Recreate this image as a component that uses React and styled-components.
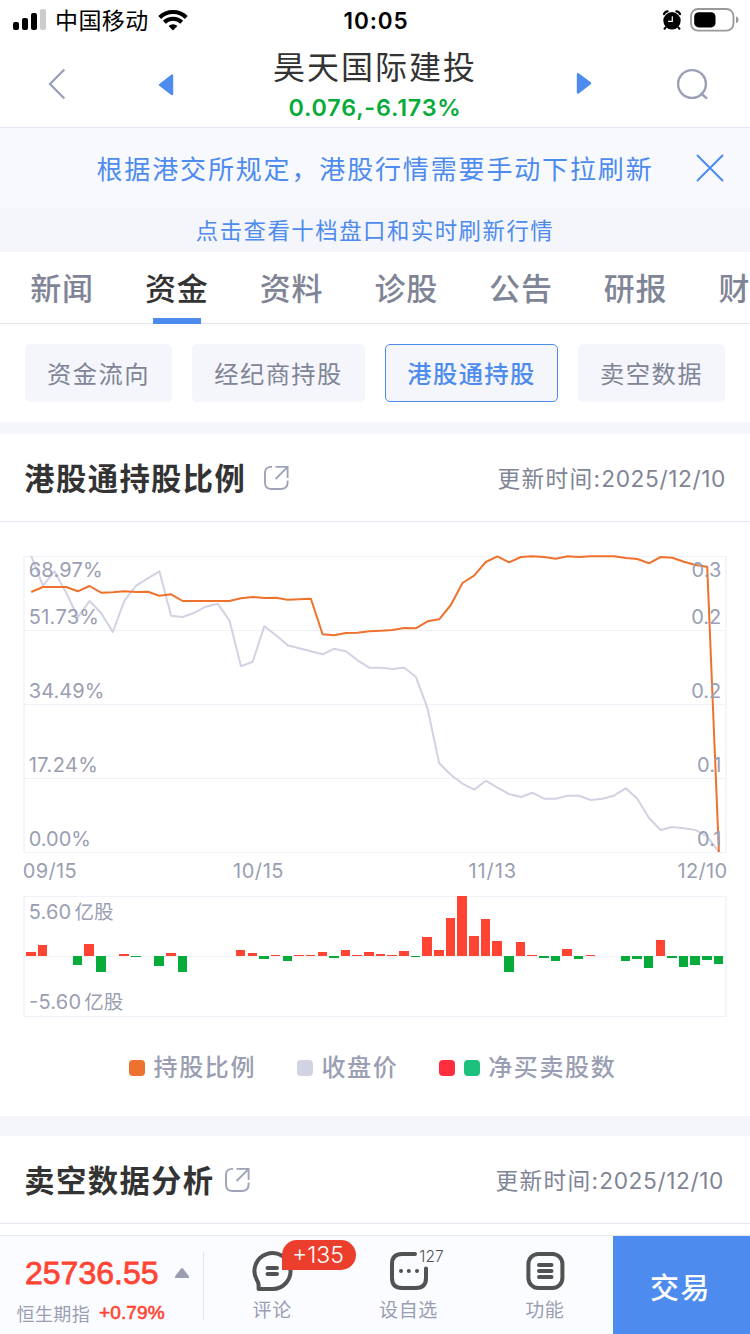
import React from "react";
import styled, { createGlobalStyle } from "styled-components";

const GlobalStyle = createGlobalStyle`
    * {
        box-sizing: border-box;
    }
    body {
        margin: 0;
        background: #fff;
        font-family: Inter, "Noto Sans CJK SC", sans-serif;
        overflow: hidden;
    }
`

const tabs = ["新闻", "资金", "资料", "诊股", "公告", "研报", "财"]

const chips = ["资金流向", "经纪商持股", "港股通持股", "卖空数据"]

// y positions of each trading day, oldest first
const ratioLine = [
    592, 587, 587, 587, 591.3, 586, 592.7, 592.3, 591.3, 592, 591.7, 595.7,
    594.3, 601, 601, 601, 601, 601, 598.3, 597, 598, 597.7, 599.7, 599.3,
    598.7, 634.3, 635.3, 633, 632.7, 631.3, 630.7, 630, 628, 628.3, 621.3, 619.3,
    605, 583, 575.7, 562, 556.3, 562.3, 557, 556.3, 557, 558.7, 556.3, 557,
    556.3, 556.3, 556.3, 558, 559, 563.3, 557, 557.7, 561.7, 565, 566.7, 852,
]

const priceLine = [
    556, 585.7, 571.3, 592.7, 617.3, 601, 613, 632, 600.7, 585.7, 578.3, 571.3,
    615.7, 617, 612.7, 606.7, 603.7, 620.3, 666.3, 661.7, 626.3, 635.3, 645.3, 648.3,
    651.3, 654.3, 648.7, 651.3, 660.3, 667.7, 667.7, 669, 667.7, 676.7, 708.3, 763.3,
    774.7, 783.7, 789.7, 780.7, 787.7, 794, 797, 792.7, 798.7, 798.7, 795.7, 795.7,
    800, 798.7, 795.7, 788.3, 798.7, 818, 830, 827, 828.3, 830, 836.7, 852,
]

const netBars = [
    4, 11, 0, 0, -9, 12, -16, 0, 2, -1, 0, -10,
    3, -16, 0, 0, 0, 0, 6, 3, -3, 1, -5, 1,
    1, 4, -2, 6, 1, 4, 2, 1, 5, -1, 19, 6,
    38, 60, 20, 37, 15, -16, 14, 1, -2, -5, 7, -3,
    1, 0, 0, -5, -3, -12, 16, -2, -11, -9, -4, -8,
]

const leftLabels = [
    { y: 577, text: "68.97%", width: 74 },
    { y: 624, text: "51.73%", width: 70.3 },
    { y: 698.3, text: "34.49%", width: 75.7 },
    { y: 772.3, text: "17.24%", width: 69.2 },
    { y: 846.3, text: "0.00%", width: 62.3 },
]

const rightLabels = [
    { y: 577, text: "0.3" },
    { y: 624, text: "0.2" },
    { y: 698.3, text: "0.2" },
    { y: 772.3, text: "0.1" },
    { y: 846.3, text: "0.1" },
]

const dayX = (i) => 31.2 + i * 11.656

const toPoints = (line) => line.map((y, i) => `${dayX(i).toFixed(1)},${y}`).join(" ")

function StatusBar(){
    return(
        <Status>
            <StatusSide>
                <svg width="34" height="22" viewBox="13 9 34 22">
                    <rect x="13" y="22" width="6" height="8" rx="2"/>
                    <rect x="22" y="18" width="6" height="12" rx="2"/>
                    <rect x="31" y="13" width="6" height="17" rx="2"/>
                    <rect x="40" y="9" width="6" height="21" rx="2" fill="#ccc"/>
                </svg>
                <Carrier>中国移动</Carrier>
                <svg width="30" height="22" viewBox="0 0 30 22" fill="none" stroke="#000" strokeWidth="4.1">
                    <path d="M1.7 8.4A19.2 19.2 0 0 1 28.3 8.4"/>
                    <path d="M6.3 13.3A12.5 12.5 0 0 1 23.7 13.3"/>
                    <path d="M15 21.6L10.6 17.1A6.3 6.3 0 0 1 19.4 17.1Z" fill="#000" stroke="none"/>
                </svg>
            </StatusSide>
            <Clock>10:05</Clock>
            <StatusSide $end>
                <svg width="20" height="20" viewBox="0 0 20 20">
                    <circle cx="10" cy="10.8" r="8.7"/>
                    <path d="M2 4.2Q3 1.6 5.6 1.4M18 4.2Q17 1.6 14.4 1.4" fill="none" stroke="#000" strokeWidth="2.2" strokeLinecap="round"/>
                    <path d="M4 17L2 19.4M16 17L18 19.4" stroke="#000" strokeWidth="2"/>
                    <path d="M10.3 6.2V11.3H6" fill="none" stroke="#fff" strokeWidth="1.2"/>
                </svg>
                <svg width="49" height="24" viewBox="0 0 49 24">
                    <rect x="1" y="1" width="42.5" height="21.6" rx="7" fill="none" stroke="#999" strokeWidth="1.8"/>
                    <rect x="4.2" y="4.2" width="21.3" height="15.2" rx="4.5"/>
                    <path d="M46 8.3Q48.6 9.4 48.6 11.8T46 15.3Z" fill="#999"/>
                </svg>
            </StatusSide>
        </Status>
    )
}

function StockHeader(){
    return(
        <Header>
            <svg width="18" height="32" viewBox="0 0 18 32" fill="none" stroke="#9a9fb3" strokeWidth="2.3">
                <path d="M16.3 1.5L2 16L16.3 30.5"/>
            </svg>
            <svg width="16" height="24" viewBox="0 0 16 24" fill="#4e8bee" stroke="#4e8bee" strokeWidth="2.4" strokeLinejoin="round">
                <path d="M14 3.6V22L2 12.9Z"/>
            </svg>
            <StockName>
                <h1>昊天国际建投</h1>
                <span>0.076,-6.173%</span>
            </StockName>
            <svg width="16" height="24" viewBox="0 0 16 24" fill="#4e8bee" stroke="#4e8bee" strokeWidth="2.4" strokeLinejoin="round">
                <path d="M2 2.2V20.6L14 11.3Z"/>
            </svg>
            <svg width="32" height="32" viewBox="0 0 32 32" fill="none" stroke="#9a9fb3" strokeWidth="2.4">
                <circle cx="15" cy="16" r="13.9"/>
                <path d="M23.7 25L30 30.6"/>
            </svg>
        </Header>
    )
}

function CardTitle({ title, date, shift }){
    return(
        <TitleRow $shift={shift}>
            <h2>{title}</h2>
            <svg width="26" height="26" viewBox="0 0 26 26" fill="none" stroke="#9fa3b7" strokeWidth="1.9">
                <path d="M9 1.9H8Q2 1.9 2 7.9V17.5Q2 24 8.5 24H17.5Q24.6 24 24.6 17.5V15.5"/>
                <path d="M12.5 1.9H24.6V13M24.2 2.3L12.6 14"/>
            </svg>
            <time>更新时间:<b>{date}</b></time>
        </TitleRow>
    )
}

function HoldingChart(){
    return(
        <Chart width="750" height="508" viewBox="0 522 750 508">
            <g stroke="#f0f0f8" strokeWidth="1" shapeRendering="crispEdges">
                {[556, 630, 704, 778, 852, 896, 956, 1016].map((y) => (
                    <path key={y} d={`M24 ${y + 0.5}H726`}/>
                ))}
            </g>
            <path d="M24 556V853M726 556V853M24 896V1017M726 896V1017" stroke="#f4f4fb" strokeWidth="2"/>
            <polyline points={toPoints(priceLine)} fill="none" stroke="#d1d2e2" strokeWidth="2" strokeLinejoin="round"/>
            <polyline points={toPoints(ratioLine)} fill="none" stroke="#ee722e" strokeWidth="2" strokeLinejoin="round"/>
            {netBars.map((v, i) => {
                if(v === 0) return null
                const left = Math.round(dayX(i) - 5.1)
                const right = Math.floor(dayX(i) + 4.95)
                return(
                    <rect
                        key={i}
                        x={left}
                        y={v > 0 ? 956 - v : 956}
                        width={right - left}
                        height={Math.abs(v)}
                        fill={v > 0 ? "#ff4433" : "#07ab3a"}
                        shapeRendering="crispEdges"
                    />
                )
            })}
            {leftLabels.map((l) => (
                <text key={l.y} x="28.7" y={l.y} textLength={l.width}>{l.text}</text>
            ))}
            {rightLabels.map((l) => (
                <text key={l.y} x="721.3" y={l.y} textAnchor="end">{l.text}</text>
            ))}
            <text x="22.7" y="877.5" textLength="54">09/15</text>
            <text x="233" y="877.5" textLength="50.5">10/15</text>
            <text x="468.5" y="877.5" textLength="47.5">11/13</text>
            <text x="677.5" y="877.5" textLength="49.5">12/10</text>
            <text x="28.7" y="918.6" textLength="42.5">5.60</text>
            <UnitText x="74.5" y="918.9">亿股</UnitText>
            <text x="29" y="1008.6" textLength="52">-5.60</text>
            <UnitText x="84.3" y="1008.9">亿股</UnitText>
        </Chart>
    )
}

function BottomBar(){
    return(
        <Bottom>
            <Index>
                <strong>25736.55</strong>
                <svg width="14" height="10" viewBox="0 0 14 10" fill="#9a9eb2">
                    <path d="M6 0.6Q7 -0.4 8 0.6L14 8.3V10H0V8.3Z"/>
                </svg>
                <p>恒生期指<em>+0.79%</em></p>
            </Index>
            <Action>
                <svg width="44" height="42" viewBox="250 1250 44 42" fill="none" stroke="#515252" strokeWidth="4" strokeLinejoin="round">
                    <path d="M258.6 1289H272.5A18 18 0 1 0 256.8 1279.8Q258.6 1282.5 258.6 1285Z"/>
                    <path d="M267.5 1268H277M267.5 1274H277" strokeLinecap="round"/>
                </svg>
                <span>评论</span>
                <Badge>+135</Badge>
            </Action>
            <Action>
                <svg width="44" height="42" viewBox="386 1250 44 42" fill="none" stroke="#515252" strokeWidth="4" strokeLinecap="round">
                    <path d="M415 1254H402Q392 1254 392 1264V1278Q392 1288 402 1288H416Q426 1288 426 1278V1268.5"/>
                    <path d="M401 1271H401.01M408.8 1271H408.81M417 1271H417.01"/>
                </svg>
                <span>设自选</span>
                <Count>127</Count>
            </Action>
            <Action>
                <svg width="44" height="42" viewBox="523 1250 44 42" fill="none" stroke="#515252" strokeWidth="4" strokeLinecap="round">
                    <rect x="528.4" y="1254" width="34" height="34" rx="10"/>
                    <path d="M539 1265H551.5M539 1271H551.5M539 1277H551.5"/>
                </svg>
                <span>功能</span>
            </Action>
            <Trade>交易</Trade>
        </Bottom>
    )
}

function App(){
    return(
        <Screen>
            <GlobalStyle/>
            <StatusBar/>
            <StockHeader/>
            <Notice>
                <span>根据港交所规定，港股行情需要手动下拉刷新</span>
                <svg width="28" height="28" viewBox="0 0 28 28" stroke="#4e8bee" strokeWidth="2">
                    <path d="M1 1L27 27M27 1L1 27"/>
                </svg>
            </Notice>
            <Hint>点击查看十档盘口和实时刷新行情</Hint>
            <Tabs>
                {tabs.map((t) => (
                    <Tab key={t} $active={t === "资金"}>{t}</Tab>
                ))}
            </Tabs>
            <Chips>
                {chips.map((c) => (
                    <Chip key={c} $active={c === "港股通持股"} $wide={c.length > 4}>{c}</Chip>
                ))}
            </Chips>
            <Gap $height={12}/>
            <CardTitle title="港股通持股比例" date="2025/12/10" shift={0}/>
            <HoldingChart/>
            <Legend>
                <LegendItem><Dot $color="#ee722e"/>持股比例</LegendItem>
                <LegendItem><Dot $color="#d1d2e2"/>收盘价</LegendItem>
                <LegendItem><Dot $color="#ff2d3e"/><Dot $color="#1bc17d"/>净买卖股数</LegendItem>
            </Legend>
            <Gap $height={20}/>
            <CardTitle title="卖空数据分析" date="2025/12/10" shift={2}/>
            <Spacer/>
            <BottomBar/>
        </Screen>
    )
}

const Screen = styled.div`
    display: flex;
    flex-direction: column;
    width: 750px;
    height: 1334px;
    overflow: hidden;
    background: #fff;
    & > * {
        flex-shrink: 0;
    }
`
const Status = styled.div`
    display: grid;
    grid-template-columns: 1fr 80px 1fr;
    align-items: center;
    height: 40px;
    padding: 0 11px 0 13px;
    color: #000;
`
const StatusSide = styled.div`
    display: flex;
    align-items: center;
    gap: 8px;
    justify-content: ${(p) => p.$end ? "flex-end" : "flex-start"};
`
const Carrier = styled.span`
    font-size: 23px;
    line-height: 38px;
    padding-top: 2px;
    letter-spacing: 0.4px;
    margin-right: 1px;
`
const Clock = styled.span`
    font-size: 22.5px;
    font-weight: 600;
    letter-spacing: 0.9px;
    text-align: center;
    white-space: nowrap;
`
const Header = styled.header`
    display: grid;
    grid-template-columns: 114px 104px 314px 104px 114px;
    align-items: center;
    justify-items: center;
    height: 88px;
    border-bottom: 1px solid #e4e5f0;
`
const StockName = styled.div`
    padding-top: 5px;
    text-align: center;
    h1 {
        margin: 0;
        font-size: 32px;
        font-weight: 400;
        line-height: 44px;
        letter-spacing: 2px;
        color: #333;
    }
    span {
        display: block;
        font-size: 23.3px;
        font-weight: 600;
        line-height: 36px;
        letter-spacing: 0.8px;
        color: #07ab3a;
    }
`
const Notice = styled.div`
    display: flex;
    align-items: center;
    justify-content: space-between;
    height: 80px;
    padding: 0 26px 0 96.5px;
    background: #f8f9fd;
    color: #4e8bee;
    font-size: 26px;
    letter-spacing: 1.85px;
    span {
        padding-bottom: 1px;
    }
`
const Hint = styled.div`
    height: 44px;
    padding-top: 1px;
    line-height: 44px;
    text-align: center;
    background: #f5f6fb;
    color: #4e8bee;
    font-size: 22.4px;
    letter-spacing: 1.5px;
`
const Tabs = styled.nav`
    display: flex;
    gap: 51.1px;
    height: 72px;
    padding-left: 30.3px;
    border-bottom: 1px solid #e4e5ee;
`
const Tab = styled.a`
    display: flex;
    flex: none;
    flex-direction: column;
    align-items: center;
    height: 72px;
    padding-top: 1px;
    font-size: 31px;
    font-weight: 500;
    line-height: 71px;
    letter-spacing: 0.8px;
    color: ${(p) => p.$active ? "#333" : "#7f8596"};
    &::after {
        content: "";
        width: ${(p) => p.$active ? "48px" : "0"};
        height: 6px;
        margin-top: -6px;
        flex-shrink: 0;
        background: #4e8bee;
    }
`
const Chips = styled.div`
    display: flex;
    gap: 20px;
    height: 98px;
    padding: 20px 25px;
`
const Chip = styled.button`
    width: ${(p) => p.$wide ? "173px" : "147px"};
    height: 58px;
    padding: 0 0 2px;
    border: 1px solid ${(p) => p.$active ? "#4e8bee" : "#f5f6fb"};
    border-radius: 5px;
    background: #f5f6fb;
    color: ${(p) => p.$active ? "#4e8bee" : "#7f8596"};
    font-family: inherit;
    font-size: 24.3px;
    font-weight: ${(p) => p.$active ? 500 : 400};
    letter-spacing: 1.4px;
    white-space: nowrap;
`
const Gap = styled.div`
    height: ${(p) => p.$height}px;
    background: #f5f6fb;
`
const TitleRow = styled.div`
    display: flex;
    align-items: center;
    height: 88px;
    padding: 0 ${(p) => 24 + p.$shift}px 0 24.3px;
    border-bottom: 1px solid #e4e5ee;
    h2 {
        margin: 0;
        padding-bottom: 1px;
        font-size: 30.3px;
        font-weight: 700;
        letter-spacing: 1.4px;
        color: #333;
    }
    svg {
        margin-left: ${(p) => p.$shift ? 10 : 17}px;
    }
    time {
        margin-left: auto;
        padding-bottom: 1px;
        font-size: 22.7px;
        letter-spacing: 1.3px;
        color: #7f8596;
    }
    b {
        font-weight: 400;
        letter-spacing: 0.6px;
    }
`
const Chart = styled.svg`
    display: block;
    text {
        font-family: Inter, "Noto Sans CJK SC", sans-serif;
        font-size: 20px;
        fill: #9a9eb2;
    }
`
const UnitText = styled.text`
    && {
        font-size: 19.5px;
    }
`
const Legend = styled.div`
    display: flex;
    gap: 40.8px;
    height: 86px;
    padding: 0 0 10px 129px;
    align-items: center;
`
const LegendItem = styled.div`
    display: flex;
    align-items: center;
    gap: 8.5px;
    height: 28px;
    font-size: 24px;
    font-weight: 500;
    line-height: 26px;
    letter-spacing: 1.65px;
    color: #9a9eb2;
    white-space: nowrap;
`
const Dot = styled.i`
    width: 16px;
    height: 16px;
    border-radius: 4px;
    background: ${(p) => p.$color};
`
const Spacer = styled.div`
    height: 11px;
`
const Bottom = styled.footer`
    display: flex;
    height: 99px;
    border-top: 1px solid #e4e5ee;
    background: #fbfcff;
`
const Index = styled.div`
    display: flex;
    flex-wrap: wrap;
    align-content: flex-start;
    align-items: center;
    width: 204px;
    height: 68px;
    margin-top: 16px;
    border-right: 1px solid #e2e3ec;
    font-family: "Liberation Sans", "Noto Sans CJK SC", sans-serif;
    strong {
        margin: 0 17px 0 25px;
        font-size: 32px;
        font-weight: 400;
        line-height: 42px;
        color: #ff4433;
        -webkit-text-stroke: 0.8px #ff4433;
    }
    p {
        display: flex;
        align-items: center;
        margin: 5px 0 0 16.5px;
        width: 100%;
        height: 28px;
        font-size: 18px;
        letter-spacing: 0.4px;
        color: #9a9eb2;
    }
    em {
        margin-left: 9px;
        font-style: normal;
        font-size: 19px;
        letter-spacing: 0.1px;
        color: #ff4433;
        -webkit-text-stroke: 0.6px #ff4433;
    }
`
const Action = styled.div`
    position: relative;
    display: flex;
    flex-direction: column;
    align-items: center;
    width: 136.3px;
    padding-top: 14px;
    span {
        margin-top: 5px;
        font-size: 19px;
        line-height: 28px;
        letter-spacing: 0.6px;
        color: #9a9eb2;
    }
`
const Badge = styled.div`
    position: absolute;
    left: 78px;
    top: 4px;
    width: 74px;
    height: 30px;
    padding-right: 2px;
    border-radius: 15px 15px 15px 0;
    background: #ec3e2c;
    color: #fff;
    font-size: 23px;
    font-weight: 300;
    line-height: 30px;
    text-align: center;
    z-index: 1;
`
const Count = styled.div`
    position: absolute;
    left: 79px;
    top: 10px;
    font-size: 15.5px;
    font-weight: 300;
    line-height: 22px;
    color: #515252;
`
const Trade = styled.button`
    flex: 1;
    height: 98px;
    padding: 2px 2px 0 0;
    border: 0;
    background: #4e8bee;
    color: #fff;
    font-family: inherit;
    font-size: 29px;
    font-weight: 500;
    letter-spacing: 1.5px;
`

export default App;
